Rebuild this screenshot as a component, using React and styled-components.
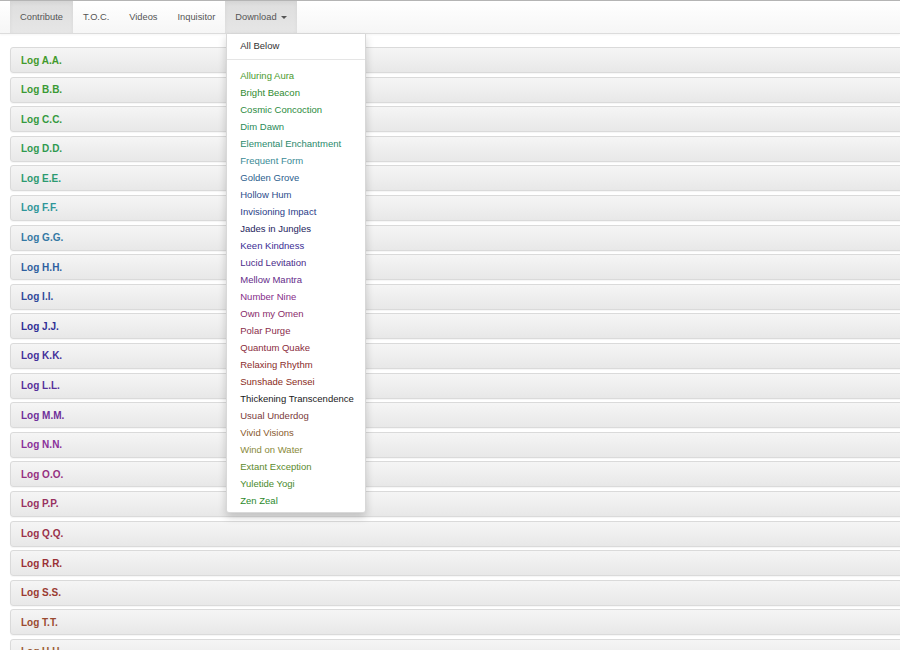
import React from 'react'
import styled, { createGlobalStyle } from 'styled-components'

const GlobalStyle = createGlobalStyle`
  html, body {
    margin: 0;
    padding: 0;
    overflow: hidden;
    background: #fff;
    font-family: "Liberation Sans", Arial, sans-serif;
  }
`

const Navbar = styled.nav`
  display: flex;
  height: 32px;
  padding-left: 10px;
  border-top: 1px solid #b4b4b4;
  border-bottom: 1px solid #dcdcdc;
  background: linear-gradient(to bottom, #ffffff 0%, #f6f6f6 100%);
  box-shadow: 0 1px 2px rgba(0, 0, 0, 0.04);
  position: relative;
  z-index: 2;
`

const NavItem = styled.div`
  position: relative;
  padding: 0 10px;
  height: 32px;
  line-height: 32px;
  font-size: 9.3px;
  color: #555;
  background: ${p => (p.$active ? 'linear-gradient(to bottom, #dedede 0%, #e6e6e6 100%)' : 'transparent')};
  box-shadow: ${p => (p.$active ? 'inset 0 2px 4px rgba(0, 0, 0, 0.05)' : 'none')};
  white-space: nowrap;
`

const Caret = styled.span`
  display: inline-block;
  width: 0;
  height: 0;
  margin-left: 4px;
  vertical-align: middle;
  border-top: 3px solid #555;
  border-left: 3px solid transparent;
  border-right: 3px solid transparent;
`

const Menu = styled.ul`
  position: absolute;
  top: 33px;
  left: 1px;
  margin: 0;
  padding: 3px 0 3px;
  list-style: none;
  width: 138px;
  background: #fff;
  border: 1px solid rgba(0, 0, 0, 0.15);
  border-top: none;
  border-radius: 0 0 3px 3px;
  box-shadow: 0 4px 9px rgba(0, 0, 0, 0.18);
  line-height: normal;
`

const MenuItem = styled.li`
  padding: 0 13px;
  height: 17px;
  line-height: 17px;
  font-size: 9.5px;
  color: ${p => p.$color};
  white-space: nowrap;
`

const Divider = styled.li`
  height: 1px;
  margin: 5px 0 7px;
  background: #e5e5e5;
`

const Content = styled.main`
  display: flex;
  flex-direction: column;
  gap: 3.6px;
  padding: 13px 0 0 10px;
  margin-right: -20px;
`

const Panel = styled.div`
  height: 24px;
  border: 1px solid #dadada;
  border-radius: 3px;
  background: linear-gradient(to bottom, #f5f5f5 0%, #e8e8e8 100%);
  display: flex;
  align-items: center;
  padding-left: 10px;
  font-size: 10px;
  font-weight: bold;
  color: ${p => p.$color};
  box-shadow: 0 1px 1px rgba(0, 0, 0, 0.04);
`

const navLinks = ['Contribute', 'T.O.C.', 'Videos', 'Inquisitor']

const downloads = [
  ['Alluring Aura', '#4a9a2c'],
  ['Bright Beacon', '#2f8a2f'],
  ['Cosmic Concoction', '#2b8a3d'],
  ['Dim Dawn', '#2a8a58'],
  ['Elemental Enchantment', '#2a8a6c'],
  ['Frequent Form', '#3a8a96'],
  ['Golden Grove', '#2c5e8e'],
  ['Hollow Hum', '#2b4c8c'],
  ['Invisioning Impact', '#2a3d88'],
  ['Jades in Jungles', '#1c1c5c'],
  ['Keen Kindness', '#3a2c94'],
  ['Lucid Levitation', '#4a2c8a'],
  ['Mellow Mantra', '#652c8a'],
  ['Number Nine', '#862c8a'],
  ['Own my Omen', '#8a2c6a'],
  ['Polar Purge', '#8a2c4c'],
  ['Quantum Quake', '#8a2c3c'],
  ['Relaxing Rhythm', '#8a2c2c'],
  ['Sunshade Sensei', '#8a2c20'],
  ['Thickening Transcendence', '#1a1a1a'],
  ['Usual Underdog', '#7a3a3a'],
  ['Vivid Visions', '#8a5a2c'],
  ['Wind on Water', '#8a8a3c'],
  ['Extant Exception', '#5c8a2c'],
  ['Yuletide Yogi', '#4a8a2c'],
  ['Zen Zeal', '#2c8a2c'],
]

const logs = [
  ['A', '#429a2c'],
  ['B', '#3a9a34'],
  ['C', '#349a3e'],
  ['D', '#2f9a50'],
  ['E', '#2c9a70'],
  ['F', '#2e9699'],
  ['G', '#3478a4'],
  ['H', '#2f5f9f'],
  ['I', '#30489a'],
  ['J', '#302f96'],
  ['K', '#44309a'],
  ['L', '#57309a'],
  ['M', '#70309a'],
  ['N', '#8a309a'],
  ['O', '#963080'],
  ['P', '#983060'],
  ['Q', '#9a3048'],
  ['R', '#9a3035'],
  ['S', '#9a3a30'],
  ['T', '#9a4a30'],
  ['U', '#9a5a30'],
]

const App = () => {
  return (
    <>
      <GlobalStyle />
      <Navbar>
        {navLinks.map((label, i) => (
          <NavItem key={label} $active={i === 0}>{label}</NavItem>
        ))}
        <NavItem $active>
          Download<Caret />
          <Menu>
            <MenuItem $color="#333">All Below</MenuItem>
            <Divider />
            {downloads.map(([name, color]) => (
              <MenuItem key={name} $color={color}>{name}</MenuItem>
            ))}
          </Menu>
        </NavItem>
      </Navbar>
      <Content>
        {logs.map(([l, color]) => (
          <Panel key={l} $color={color}>Log {l}.{l}.</Panel>
        ))}
      </Content>
    </>
  )
}

export default App
